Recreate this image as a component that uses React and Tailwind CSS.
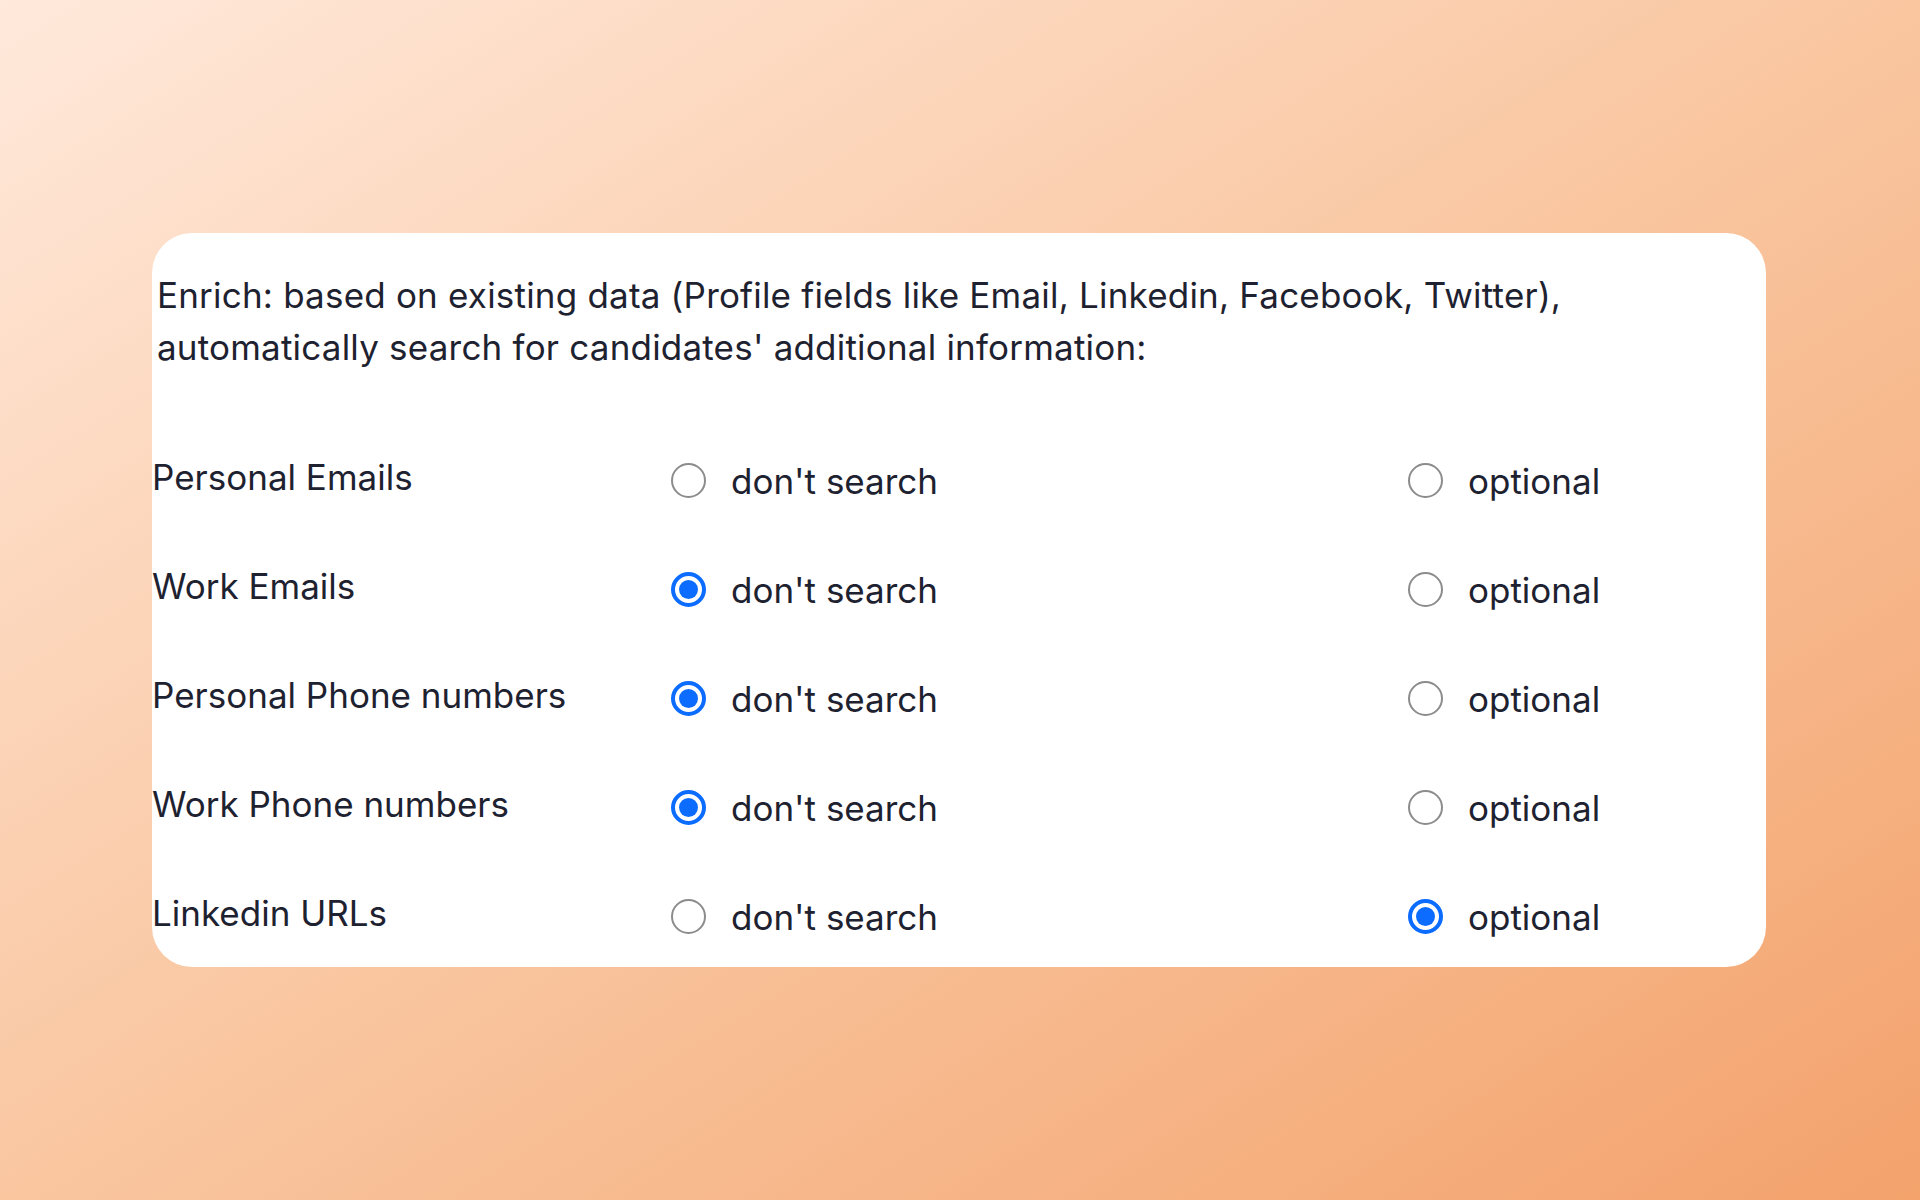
import { useState } from 'react'

const FIELDS = [
  { id: 'personalEmails', label: 'Personal Emails', value: null },
  { id: 'workEmails', label: 'Work Emails', value: 'dont' },
  { id: 'personalPhones', label: 'Personal Phone numbers', value: 'dont' },
  { id: 'workPhones', label: 'Work Phone numbers', value: 'dont' },
  { id: 'linkedinUrls', label: 'Linkedin URLs', value: 'optional' },
]

function Radio({ checked, onClick }) {
  return (
    <button
      type="button"
      onClick={onClick}
      className={`flex items-center justify-center w-[35px] h-[35px] -mt-[3px] rounded-full shrink-0 ${
        checked ? 'border-[4px] border-[#0b6cff]' : 'border-[2px] border-[#8c8c8c]'
      }`}
    >
      {checked && <span className="w-[19px] h-[19px] rounded-full bg-[#0b6cff]" />}
    </button>
  )
}

export default function App() {
  const [values, setValues] = useState(
    Object.fromEntries(FIELDS.map(f => [f.id, f.value]))
  )

  const pick = (id, v) => setValues(prev => ({ ...prev, [id]: v }))

  return (
    <div
      className="w-[1920px] h-[1200px] pt-[233px] pl-[152px] bg-linear-to-br from-[#ffe9db] via-[#f9c6a0] to-[#f3a26c] text-[#1e2230]"
      style={{ fontFamily: 'Inter, "Noto Sans", sans-serif' }}
    >
      <div className="w-[1614px] h-[734px] bg-white rounded-[40px] overflow-hidden">
        {/* Description */}
        <p className="pt-[36px] pl-[5px] text-[35px] leading-[52px] tracking-[0.2px]">
          Enrich: based on existing data (Profile fields like Email, Linkedin, Facebook, Twitter),
          <br />
          automatically search for candidates' additional information:
        </p>

        {/* Rows */}
        <div className="mt-[54px]">
          {FIELDS.map(field => (
            <div key={field.id} className="grid grid-cols-[519px_737px_1fr] h-[109px] items-center">
              <div className="text-[35px] -mt-[8px]">{field.label}</div>
              <label className="flex items-center gap-[25px] cursor-pointer">
                <Radio checked={values[field.id] === 'dont'} onClick={() => pick(field.id, 'dont')} />
                <span className="text-[35px]">don't search</span>
              </label>
              <label className="flex items-center gap-[25px] cursor-pointer">
                <Radio checked={values[field.id] === 'optional'} onClick={() => pick(field.id, 'optional')} />
                <span className="text-[35px]">optional</span>
              </label>
            </div>
          ))}
        </div>
      </div>
    </div>
  )
}
